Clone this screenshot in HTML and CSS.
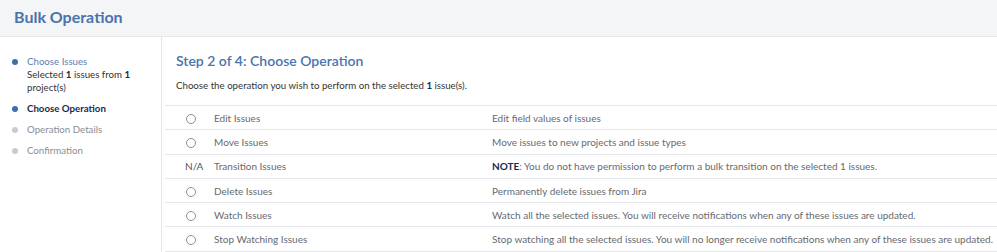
FILE: index.html
```html
<!DOCTYPE html>
<html lang="en">
<head>
    <meta charset="UTF-8">
    <title>Bulk Operation</title>
    <link rel="stylesheet" href="styles.css">
</head>
<body>

<header class="page-header">
    <h1>Bulk Operation</h1>
</header>

<div class="layout">
    <nav class="steps">
        <ul>
            <li class="step done">
                <span class="step-name">Choose Issues</span>
                <span class="step-info">Selected <b>1</b> issues from <b>1</b> project(s)</span>
            </li>
            <li class="step current"><span class="step-name">Choose Operation</span></li>
            <li class="step todo"><span class="step-name">Operation Details</span></li>
            <li class="step todo"><span class="step-name">Confirmation</span></li>
        </ul>
    </nav>

    <main class="content">
        <h2>Step 2 of 4: Choose Operation</h2>
        <p class="intro">Choose the operation you wish to perform on the selected <b>1</b> issue(s).</p>

        <table class="ops">
            <tr>
                <td class="pick"><span class="radio"></span></td>
                <td class="name">Edit Issues</td>
                <td class="desc">Edit field values of issues</td>
            </tr>
            <tr>
                <td class="pick"><span class="radio"></span></td>
                <td class="name">Move Issues</td>
                <td class="desc">Move issues to new projects and issue types</td>
            </tr>
            <tr>
                <td class="pick">N/A</td>
                <td class="name">Transition Issues</td>
                <td class="desc"><b class="note">NOTE</b>: You do not have permission to perform a bulk transition on the selected 1 issues.</td>
            </tr>
            <tr>
                <td class="pick"><span class="radio"></span></td>
                <td class="name">Delete Issues</td>
                <td class="desc">Permanently delete issues from Jira</td>
            </tr>
            <tr>
                <td class="pick"><span class="radio"></span></td>
                <td class="name">Watch Issues</td>
                <td class="desc">Watch all the selected issues. You will receive notifications when any of these issues are updated.</td>
            </tr>
            <tr>
                <td class="pick"><span class="radio"></span></td>
                <td class="name">Stop Watching Issues</td>
                <td class="desc">Stop watching all the selected issues. You will no longer receive notifications when any of these issues are updated.</td>
            </tr>
        </table>
    </main>
</div>

</body>
</html>
```

FILE: styles.css
```css
body {
    font-family: Lato, "Open Sans", Arial, sans-serif;
    font-size: 10px;
    margin: 0;
    padding: 0;
    background-color: #fff;
    color: #666a70;
}

.page-header {
    background-color: #f4f5f7;
    border-bottom: 1px solid #e6e8ec;
    height: 36px;
    padding: 0 14px;
    display: flex;
    align-items: center;
}

.page-header h1 {
    margin: 0 0 4px;
    font-size: 16px;
    font-weight: 700;
    color: #4a73ad;
}

.layout {
    display: flex;
}

.steps {
    width: 162px;
    border-right: 1px solid #e4e6ea;
    padding-top: 18px;
    min-height: 220px;
    box-sizing: border-box;
}

.steps ul {
    list-style: none;
    margin: 0;
    padding: 0 0 0 11px;
}

.step {
    position: relative;
    padding-left: 16px;
    line-height: 13px;
    margin-bottom: 8px;
    font-size: 9.7px;
}

.step::before {
    content: "";
    position: absolute;
    left: 1px;
    top: 4px;
    width: 6px;
    height: 6px;
    border-radius: 50%;
    background-color: #c9cbd0;
}

.step-name,
.step-info {
    display: block;
}

.step.done::before,
.step.current::before {
    background-color: #3f6db0;
}

.step.done .step-name {
    color: #5e80b3;
}

.step.done .step-info {
    color: #333;
}

.step.done .step-info b {
    color: #172b4d;
}

.step.current .step-name {
    font-weight: 700;
    color: #172b4d;
}

.step.todo .step-name {
    color: #8a8d92;
}

.content {
    flex: 1;
    padding: 14px 0 0 3px;
}

.content h2 {
    margin: 0 0 0 11px;
    font-size: 14px;
    font-weight: 600;
    color: #4a73ad;
    line-height: 20px;
}

.intro {
    margin: 8px 0 14px 11px;
    font-size: 9.7px;
    color: #333;
}

.intro b {
    color: #172b4d;
}

.ops {
    width: 100%;
    border-collapse: collapse;
    table-layout: fixed;
}

.ops td {
    box-sizing: border-box;
    border-top: 1px solid #e6e7ea;
    border-bottom: 1px solid #e6e7ea;
    height: 24.3px;
    padding: 0;
    vertical-align: middle;
    white-space: nowrap;
}

.ops .pick {
    width: 49px;
    padding-left: 20px;
    color: #555;
}

.ops .name {
    width: 278px;
}

.ops .desc {
    padding-right: 4px;
}

.ops .note {
    color: #172b4d;
}

.radio {
    display: inline-block;
    width: 8px;
    height: 8px;
    border: 1px solid #8c8f94;
    border-radius: 50%;
    margin-left: 1px;
    vertical-align: middle;
}
```
